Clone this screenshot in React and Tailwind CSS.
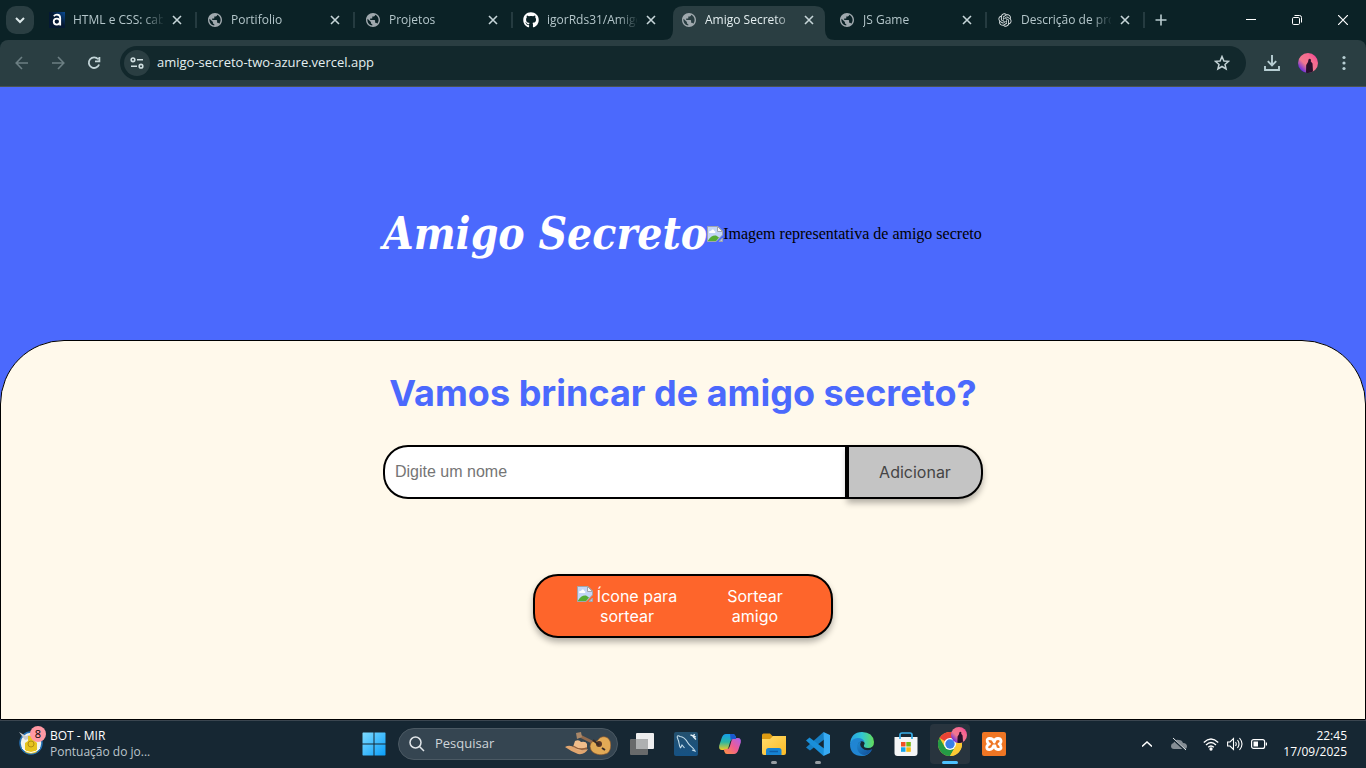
import React from "react";
import { FaGithub } from "react-icons/fa";
import { RiOpenaiFill } from "react-icons/ri";

const GlobeIcon = () => (
  <svg viewBox="2 2 20 20" className="size-3.5 fill-[#9fa8ad]" aria-hidden="true">
    <path d="M12 2C6.48 2 2 6.48 2 12s4.48 10 10 10 10-4.48 10-10S17.52 2 12 2zm-1 17.93c-3.95-.49-7-3.85-7-7.93 0-.62.08-1.21.21-1.79L9 15v1c0 1.1.9 2 2 2v1.93zm6.9-2.54c-.26-.81-1-1.39-1.9-1.39h-1v-3c0-.55-.45-1-1-1H8v-2h2c.55 0 1-.45 1-1V7h2c1.1 0 2-.9 2-2v-.41c2.93 1.19 5 4.06 5 7.41 0 2.08-.8 3.97-2.1 5.39z" />
  </svg>
);

const AluraIcon = () => (
  <svg viewBox="0 0 16 16" className="size-4" aria-hidden="true">
    <defs>
      <linearGradient id="alura" x1="0" y1="1" x2="1" y2="0">
        <stop offset=".55" stopColor="#051933" />
        <stop offset="1" stopColor="#0a4c95" />
      </linearGradient>
    </defs>
    <rect width="16" height="16" fill="url(#alura)" />
    <path d="M4.800 4.200Q6 2.600 8 2.600Q11.200 2.600 11.200 6V13.500" fill="none" stroke="#fff" strokeWidth="1.800" />
    <ellipse cx="7.800" cy="9.600" rx="3.100" ry="3" fill="none" stroke="#fff" strokeWidth="1.800" />
  </svg>
);

const BrokenImage = ({ className = "" }) => (
  <svg viewBox="0 0 16 16" className={"size-4 shrink-0 " + className} aria-hidden="true">
    <path d="M.5.500H11L15.500 5V9L9 15.500H.500Z" fill="#c4d6f7" stroke="#a0a6ad" />
    <path d="M2 6.500C2 5 3.500 4.700 4 5.200C4.400 3 7 3 7.300 5C8.500 5 8.700 6.500 8 7H2.500Z" fill="#fff" />
    <path d="M1 14.500C3 11 6 9 9 9.500L12 11.500L9 15H1Z" fill="#56ad35" />
    <path d="M10.500.5V5.500H15.500Z" fill="#f5f6f8" stroke="#a0a6ad" />
    <path d="M12 15.500L15.500 12V15.500Z" fill="#b9cbe9" stroke="#a0a6ad" />
  </svg>
);

const tabs = [
  { title: "HTML e CSS: cab", icon: <AluraIcon />, line: true },
  { title: "Portifolio", icon: <GlobeIcon />, line: true },
  { title: "Projetos", icon: <GlobeIcon />, line: true },
  { title: "igorRds31/Amigo", icon: <FaGithub className="size-4 text-white" /> },
  { title: "Amigo Secreto", icon: <GlobeIcon />, active: true },
  { title: "JS Game", icon: <GlobeIcon />, line: true },
  { title: "Descrição de pro", icon: <RiOpenaiFill className="size-4 text-[#dfe5e6]" />, line: true },
];

function Tab({ title, icon, active, line }) {
  return (
    <div className="relative flex w-[158px] shrink-0 items-center pt-1.5 pb-1.5">
      {active && (
        <svg viewBox="0 0 172 34" className="absolute top-1.5 -left-2 h-[34px] w-[172px] fill-[#2a3e42]" aria-hidden="true">
          <path d="M0 34Q10 34 10 24V10Q10 0 20 0H152Q162 0 162 10V24Q162 34 172 34Z" />
        </svg>
      )}
      <button
        className={
          "relative flex h-7 items-center gap-2 pl-2.5 text-left text-xs " +
          (active ? "text-[#e3edef]" : "text-[#b4c6ca]")
        }
      >
        <span className="flex size-4 items-center justify-center">{icon}</span>
        <span className="w-[90px] overflow-hidden whitespace-nowrap [mask-image:linear-gradient(to_right,#000_70px,transparent_92px)]">
          {title}
        </span>
      </button>
      <button aria-label="Fechar guia" className="relative ml-1.5 flex size-4 items-center justify-center">
        <svg viewBox="0 0 10 10" className="size-2.5 fill-none stroke-[#c6d5d8] stroke-[1.6]">
          <path d="M1 1L9 9M9 1L1 9" />
        </svg>
      </button>
      {line && <span className="absolute top-3 right-0 h-4 w-0.5 bg-[#253b40]" />}
    </div>
  );
}

const ToolButton = ({ label, children }) => (
  <button aria-label={label} className="flex h-9 w-9 items-center justify-center">
    {children}
  </button>
);

const Avatar = ({ className }) => (
  <svg viewBox="0 0 20 20" className={className} aria-hidden="true">
    <defs>
      <linearGradient id="avatar" x1="0" y1="1" x2="1" y2="0">
        <stop offset=".1" stopColor="#4a1cf0" />
        <stop offset=".4" stopColor="#f0788f" />
        <stop offset=".7" stopColor="#f66a90" />
        <stop offset="1" stopColor="#f5309a" />
      </linearGradient>
    </defs>
    <circle cx="10" cy="10" r="10" fill="url(#avatar)" />
    <path d="M8 19.800L8.200 12L10 9L10.500 6.500Q11.800 5 13 6.800L12.800 8.500L14.500 10.500L15 18.500Q12 20.500 8 19.800Z" fill="#29102b" />
  </svg>
);

function Browser() {
  return (
    <header className="bg-[#0b2226] font-['Open_Sans',sans-serif]">
      <div className="flex h-10">
        <button aria-label="Pesquisar guias" className="mt-1.5 ml-1.5 flex size-7 items-center justify-center rounded-[10px] bg-[#2a3e42]">
          <svg viewBox="0 0 10 10" className="size-2.5 fill-none stroke-[#dce8ea] stroke-2">
            <path d="M1 3L5 7L9 3" />
          </svg>
        </button>
        <nav className="ml-[5px] flex">
          {tabs.map((t) => (
            <Tab key={t.title} {...t} />
          ))}
        </nav>
        <button aria-label="Nova guia" className="flex w-8 items-center justify-center">
          <svg viewBox="0 0 12 12" className="size-3 fill-none stroke-[#b9cccf] stroke-[1.6]">
            <path d="M6 .5V11.500M.5 6H11.500" />
          </svg>
        </button>
        <div className="ml-auto flex">
          <button aria-label="Minimizar" className="flex w-[46px] items-center justify-center">
            <svg viewBox="0 0 10 10" className="size-2.5 stroke-white"><path d="M0 4.500H10" /></svg>
          </button>
          <button aria-label="Restaurar" className="flex w-[46px] items-center justify-center">
            <svg viewBox="0 0 10 10" className="size-2.5 fill-none stroke-white">
              <rect x=".5" y="2.500" width="7" height="7" rx="1.200" />
              <path d="M2.500.5H7.500Q9.500.5 9.500 2.500V7.500" />
            </svg>
          </button>
          <button aria-label="Fechar" className="flex w-[46px] items-center justify-center">
            <svg viewBox="0 0 10 10" className="size-2.5 fill-none stroke-white stroke-[1.2]"><path d="M0 0L10 10M10 0L0 10" /></svg>
          </button>
        </div>
      </div>
      <div className="flex h-[47px] items-center rounded-t-lg border-b border-[#4a5350] bg-[#2a3e42] px-1">
        <ToolButton label="Voltar">
          <svg viewBox="0 0 14 14" className="size-3.5 fill-none stroke-[#6c7f83] stroke-[1.6]"><path d="M13 7H1.500M7 1L1.200 7L7 13" /></svg>
        </ToolButton>
        <ToolButton label="Avançar">
          <svg viewBox="0 0 14 14" className="size-3.5 fill-none stroke-[#6c7f83] stroke-[1.6]"><path d="M1 7H12.500M7 1L12.800 7L7 13" /></svg>
        </ToolButton>
        <ToolButton label="Recarregar">
          <svg viewBox="0 0 14 14" className="size-3.5 fill-none stroke-[#c3d5d8] stroke-[1.8]">
            <path d="M11.200 3.300A5.300 5.300 0 1 0 12.100 8.500M12.400 1V5.400H8" />
          </svg>
        </ToolButton>
        <div className="mx-2 flex h-[34px] flex-1 items-center rounded-full bg-[#12282c] pr-4 pl-1">
          <button aria-label="Informações do site" className="flex size-[26px] items-center justify-center rounded-full bg-[#2a3e42]">
            <svg viewBox="0 0 14 12" className="h-3 w-3.5 fill-none stroke-[#d0dfe1] stroke-[1.6]">
              <circle cx="3" cy="2.800" r="1.800" /><path d="M7 2.800H13M1 9.200H7" /><circle cx="11" cy="9.200" r="1.800" />
            </svg>
          </button>
          <input aria-label="Endereço" defaultValue="amigo-secreto-two-azure.vercel.app" className="ml-[7px] min-w-0 flex-1 bg-transparent text-[13px] text-[#e4eff0] outline-none" />
          <button aria-label="Favoritar" className="flex size-4 items-center justify-center">
            <svg viewBox="0 0 16 16" className="size-4 fill-none stroke-[#c3d2d5] stroke-[1.5]">
              <path d="M8 1.500L9.900 6L14.600 6.300L11 9.400L12.100 14L8 11.500L3.900 14L5 9.400L1.400 6.300L6.100 6Z" />
            </svg>
          </button>
        </div>
        <ToolButton label="Downloads">
          <svg viewBox="0 0 16 16" className="size-4 fill-none stroke-[#b7ced3] stroke-[1.9]">
            <path d="M8 0V10M3.800 6.200L8 10.400L12.200 6.200M1 11V15H15V11" />
          </svg>
        </ToolButton>
        <ToolButton label="Perfil"><Avatar className="size-5" /></ToolButton>
        <ToolButton label="Menu">
          <svg viewBox="0 0 4 16" className="h-4 w-1 fill-[#b7ced3]">
            <circle cx="2" cy="2.500" r="1.600" /><circle cx="2" cy="8" r="1.600" /><circle cx="2" cy="13.500" r="1.600" />
          </svg>
        </ToolButton>
      </div>
    </header>
  );
}

function Page() {
  return (
    <main className="flex flex-1 flex-col bg-[#4b69fd]">
      <div className="flex justify-center pt-[117px] pb-[76px]">
        <div className="flex w-full max-w-[600px] items-center">
          <h1 className="font-['DejaVu_Serif_Condensed','DejaVu_Serif',serif] text-[44px] leading-[60px] font-black whitespace-nowrap text-white italic">
            Amigo Secreto
          </h1>
          <div role="img" aria-label="Imagem representativa de amigo secreto" className="flex items-center font-['Liberation_Serif',serif] text-base whitespace-nowrap text-black">
            <BrokenImage />
            <span>Imagem representativa de amigo secreto</span>
          </div>
        </div>
      </div>
      <section className="flex flex-1 flex-col items-center rounded-t-[64px] border border-black bg-[#fff9eb] pt-[30px] font-['Inter',sans-serif]">
        <h2 className="text-4xl leading-[44px] font-bold text-[#4b69fd]">Vamos brincar de amigo secreto?</h2>
        <form className="mt-[30px] flex h-[54px] w-full max-w-[600px]" onSubmit={(e) => e.preventDefault()}>
          <input
            type="text"
            aria-label="Digite um nome"
            placeholder="Digite um nome"
            className="min-w-0 flex-1 rounded-l-[25px] border-2 border-black bg-white px-2.5 font-['Liberation_Sans',sans-serif] text-base placeholder:text-[#757575]"
          />
          <button className="w-[136px] rounded-r-[25px] border-2 border-black bg-[#c4c4c4] text-base text-[#444444] shadow-[0_4px_6px_rgba(0,0,0,0.3)]">
            Adicionar
          </button>
        </form>
        <button className="mt-[75px] flex h-16 w-[300px] items-center gap-10 rounded-[25px] border-2 border-black bg-[#fe652b] px-10 text-base leading-5 text-white shadow-[0_4px_6px_rgba(0,0,0,0.3)]">
          <span className="w-[104px]">
            <BrokenImage className="mr-1 inline-block align-top" />
            Ícone para sortear
          </span>
          <span className="w-[72px]">Sortear amigo</span>
        </button>
      </section>
    </main>
  );
}

const CopilotIcon = () => (
  <svg viewBox="0 0 24 24" className="size-6">
    <defs>
      <linearGradient id="cpA" x1="0" y1="0" x2="0" y2="1"><stop stopColor="#159dea" /><stop offset=".5" stopColor="#28b6a5" /><stop offset="1" stopColor="#f3cb22" /></linearGradient>
      <linearGradient id="cpB" x1="1" y1="0" x2="0" y2="1"><stop stopColor="#a960f1" /><stop offset=".5" stopColor="#ef5c91" /><stop offset="1" stopColor="#ff963d" /></linearGradient>
    </defs>
    <path d="M8 2H15Q17 2 17.700 4.500L18.300 7H15Q13 7 12.200 9.500L10.300 16Q9.500 18 7 18H4Q.5 18 1.200 13.500L3.700 6Q5 2 8 2Z" fill="url(#cpA)" />
    <path d="M16 22H9Q7 22 6.300 19.500L5.700 17H9Q11 17 11.800 14.500L13.700 8Q14.500 6 17 6H20Q23.500 6 22.800 10.500L20.300 18Q19 22 16 22Z" fill="url(#cpB)" />
    <path d="M12 2H15Q17 2 17.700 4.500L18.300 7H15Q13.500 7 12.700 8Z" fill="#1b58cf" />
  </svg>
);

const MysqlIcon = () => (
  <svg viewBox="0 0 24 24" className="size-6">
    <defs><linearGradient id="my" x2="0" y2="1"><stop stopColor="#24516f" /><stop offset="1" stopColor="#165284" /></linearGradient></defs>
    <rect width="24" height="24" rx="2" fill="url(#my)" />
    <path d="M6.500 16C4.500 13 5.500 10 4 7.500C2.500 4.500 3 2.500 6 4.500C10 4.500 12 7.500 14 11C16 14.500 19 14.500 21 19L18 18M6.500 16L8 13L10.500 16" fill="none" stroke="#c3dce9" strokeWidth="1.100" />
    <path d="M16.500 3L18.500 3.500L19.500 5L22 7.500M20.500 2L19.500 4L22 5" fill="none" stroke="#e4f0f6" strokeWidth="1.300" />
  </svg>
);

const FolderIcon = () => (
  <svg viewBox="0 0 24 24" className="size-6">
    <defs><linearGradient id="fold" x2="1" y2="1"><stop stopColor="#ffdc6c" /><stop offset="1" stopColor="#fbba24" /></linearGradient></defs>
    <path d="M0 3Q0 1.500 1.500 1.500H8L10.500 4H22.500Q24 4 24 5.500V12H0Z" fill="#dd9b12" />
    <path d="M0 7H8L11 4H24V21Q24 23 22 23H2Q0 23 0 21Z" fill="url(#fold)" />
    <path d="M4 23V18.500Q4 16 6.500 16H17Q19.500 16 19.500 18.500V23Z" fill="#1683d2" />
    <path d="M7.500 19.500H16" stroke="#0d5da7" strokeWidth="1.500" />
  </svg>
);

const CodeIcon = () => (
  <svg viewBox="0 0 24 24" className="size-6">
    <path d="M17.500 0L20 6L4 18.500L0 15.500Z" fill="#167fc4" />
    <path d="M0 8.500L3.500 5.500L20 18L17.500 24L0 8.500Z" fill="#198fd9" />
    <path d="M17.500 0L24 3V21L17.500 24L17.800 17V7Z" fill="#37aaf2" />
  </svg>
);

const EdgeIcon = () => (
  <svg viewBox="0 0 24 24" className="size-6">
    <defs>
      <linearGradient id="edA" x2="1"><stop stopColor="#279fe3" /><stop offset=".5" stopColor="#31c6d3" /><stop offset="1" stopColor="#63dc58" /></linearGradient>
      <linearGradient id="edB" x2="1" y2="1"><stop stopColor="#1d8bd3" /><stop offset="1" stopColor="#124a94" /></linearGradient>
    </defs>
    <path d="M0 12Q1 0 12 0Q23 0 24 10Q24 16 18 16Q13 16 14 13Q16 11 12 8Q6 5 0 12Z" fill="url(#edA)" />
    <path d="M0 12Q2 6 8 6Q13 6 14.500 10Q11 8 8.500 11Q6 16 11 20Q17 23 22 18Q18 24 12 24Q0 24 0 12Z" fill="#2085d2" />
    <path d="M10 9.500Q5 13 8 19Q12 25 18 22Q21 20 22.300 17Q16 20 12 16Q9 13 11 10Z" fill="url(#edB)" />
  </svg>
);

const StoreIcon = () => (
  <svg viewBox="0 0 24 24" className="size-6">
    <path d="M.5 5H23.500V21Q23.500 24 20.500 24H3.500Q.5 24 .5 21Z" fill="#f4f5f6" />
    <path d="M6 7V3Q6 1 8 1H16Q18 1 18 3V7" fill="none" stroke="#38aee9" strokeWidth="1.700" />
    <rect x="7" y="10" width="4.500" height="4.500" fill="#f04f24" /><rect x="12.300" y="10" width="4.500" height="4.500" fill="#77b914" />
    <rect x="7" y="15.300" width="4.500" height="4.500" fill="#13a4ea" /><rect x="12.300" y="15.300" width="4.500" height="4.500" fill="#f8b90d" />
  </svg>
);

const ChromeIcon = () => (
  <svg viewBox="0 0 24 24" className="size-6">
    <circle cx="12" cy="12" r="12" fill="#fcc934" />
    <path d="M12 12L1.600 6A12 12 0 0 1 22.400 6Z" fill="#ea4335" />
    <path d="M1.600 6A12 12 0 0 0 12 24L17.200 15L12 12L6.800 15Z" fill="#249b45" />
    <path d="M12 6H22.400A12 12 0 0 1 12 24L17.200 15Z" fill="#fcc934" />
    <circle cx="12" cy="12" r="6" fill="#fff" /><circle cx="12" cy="12" r="4.700" fill="#397fe8" />
  </svg>
);

const XamppIcon = () => (
  <svg viewBox="0 0 24 24" className="size-6">
    <rect width="24" height="24" rx="2" fill="#ef7624" />
    <path
      d="M7.500 6.500Q4.800 6.500 5.200 9Q5.500 11.500 7.500 12Q4.800 13 4.800 15.300Q4.800 17.800 7.500 17.600Q10.800 17.300 11.500 14H13Q13 17.500 16 17.500Q19.500 17.500 19 15Q18.700 12.700 17 12Q19.300 11 19 8.700Q18.600 6.500 16 6.500Q12.700 6.500 12.200 10Q11.500 6.500 7.500 6.500Z"
      fill="none" stroke="#fff" strokeWidth="2.800" strokeLinejoin="round"
    />
  </svg>
);

const WindowsIcon = () => (
  <svg viewBox="0 0 24 24" className="size-6">
    <defs>
      <linearGradient id="win" gradientUnits="userSpaceOnUse" x1="0" y1="0" x2="24" y2="24"><stop stopColor="#80dcff" /><stop offset="1" stopColor="#079cf9" /></linearGradient>
    </defs>
    <path d="M1 .5H11.500V11.500H.5V1ZM12.500.5H23L23.500 1V11.500H12.500ZM.5 12.500H11.500V23.500H1L.5 23ZM12.500 12.500H23.500V23L23 23.500H12.500Z" fill="url(#win)" />
  </svg>
);

const DesktopsIcon = () => (
  <svg viewBox="0 0 24 24" className="size-6">
    <rect x="6" y="1" width="18" height="16" rx="1" fill="#eeeeef" />
    <rect x="0" y="7" width="18" height="16" rx="1" fill="#686a6b" />
    <path d="M6 7H18V17H6Z" fill="#aeb0b1" />
  </svg>
);

const GuitarArt = () => (
  <svg viewBox="0 0 46 24" className="h-6 w-[46px]" aria-hidden="true">
    <path d="M13 3L33 13" stroke="#926a4d" strokeWidth="3" />
    <path d="M11 1L16 0L17 5L12 7Z" fill="#a98768" />
    <path d="M26 11C28 8 31 11 33 8C36 3 43 4 45 9C47 14 45 22 40 22C36 24 28 22 26 18Q24 14 26 11Z" fill="#e2aa56" stroke="#8b572c" strokeWidth=".7" />
    <circle cx="34" cy="12" r="3" fill="#563527" /><path d="M28 8L34 13M37 16L40 18" stroke="#372b28" strokeWidth="2" />
    <path d="M0 15Q5 12 10 16Q16 20 23 17Q20 23 13 22Q7 20 0 15Z" fill="#e0a56f" />
    <path d="M8 15L10 9Q14 7 16 10Q21 9 22 12V17Q15 21 8 15Z" fill="#f0bd8b" />
    <path d="M8 14Q15 19 22 16" fill="none" stroke="#93603c" strokeWidth="1.500" />
  </svg>
);

const apps = [
  { name: "Visão de tarefas", icon: <DesktopsIcon /> },
  { name: "MySQL Workbench", icon: <MysqlIcon /> },
  { name: "Copilot", icon: <CopilotIcon /> },
  { name: "Explorador de Arquivos", icon: <FolderIcon />, running: true },
  { name: "Visual Studio Code", icon: <CodeIcon />, running: true },
  { name: "Edge", icon: <EdgeIcon /> },
  { name: "Microsoft Store", icon: <StoreIcon /> },
  { name: "Chrome", icon: <ChromeIcon />, current: true },
  { name: "XAMPP", icon: <XamppIcon /> },
];

function Taskbar() {
  return (
    <footer className="grid h-12 grid-cols-[1fr_auto_1fr] items-center bg-[#162733] font-['Open_Sans',sans-serif] text-white shadow-[inset_0_1px_#3b4650]">
      <button className="flex items-center gap-1 justify-self-start pl-[18px] text-left">
        <span className="relative size-7">
          <svg viewBox="0 0 28 28" className="size-7" aria-hidden="true">
            <circle cx="13" cy="13" r="11" fill="#f1f3ed" stroke="#2370b6" strokeWidth="1.500" />
            <path d="M1 2L8 6L13 4L14 8L7 10Z" fill="#c9ccd0" />
            <path d="M10 6H17V11L19 13V22Q13 25 7 22V13L10 11Z" fill="#e7c41f" />
            <circle cx="13" cy="14" r="3" fill="none" stroke="#b18d14" />
            <path d="M4 18Q13 27 22 18" fill="none" stroke="#fff" />
          </svg>
          <span className="absolute -top-1 left-3 flex size-4 items-center justify-center rounded-full bg-[#ff99a4] text-[11px] text-black">8</span>
        </span>
        <span className="text-xs leading-4">
          <span className="block">BOT - MIR</span>
          <span className="block text-[#bcc5cb]">Pontuação do jo...</span>
        </span>
      </button>
      <div className="flex items-center pl-0.5">
        <button aria-label="Iniciar" className="flex h-10 w-11 items-center justify-center"><WindowsIcon /></button>
        <div className="mx-0.5 flex h-8 w-[220px] items-center rounded-full border border-[#4b5963] bg-[#354551] pr-1.5 pl-2.5">
          <svg viewBox="0 0 16 16" className="size-4 shrink-0 fill-none stroke-[#e1e6e9] stroke-[1.5]" aria-hidden="true">
            <circle cx="6.500" cy="6.500" r="5.500" /><path d="M10.500 10.500L15 15" />
          </svg>
          <input aria-label="Pesquisar" placeholder="Pesquisar" className="ml-2.5 min-w-0 flex-1 bg-transparent text-[13px] outline-none placeholder:text-[#cfd5d9]" />
          <GuitarArt />
        </div>
        {apps.map((a) => (
          <button key={a.name} aria-label={a.name} className="flex w-11 justify-center">
            <span className={"relative flex size-10 items-center justify-center rounded " + (a.current ? "bg-[#28343e]" : "")}>
              {a.icon}
              {a.current && <Avatar className="absolute top-[3px] right-[3px] size-4" />}
              {a.running && <span className="absolute bottom-0 h-[3px] w-1.5 rounded-full bg-[#969da2]" />}
              {a.current && <span className="absolute bottom-0 h-[3px] w-4 rounded-full bg-[#4cc2ff]" />}
            </span>
          </button>
        ))}
      </div>
      <div className="flex items-center justify-self-end pr-[19px]">
        <button aria-label="Ícones ocultos" className="flex w-8 justify-center">
          <svg viewBox="0 0 10 6" className="h-1.5 w-2.5 fill-none stroke-white stroke-[1.5]"><path d="M0 5.500L5 1L10 5.500" /></svg>
        </button>
        <button aria-label="OneDrive" className="flex w-8 justify-center">
          <svg viewBox="0 0 16 14" className="h-3.5 w-4">
            <path d="M3 12Q0 12 0 9Q0 6.500 2.500 6Q4 2 8 3Q11 3 12 6Q16 6 16 9.500Q16 12 13 12Z" fill="#858e95" />
            <path d="M2 2L14 13" stroke="#162733" strokeWidth="2.200" /><path d="M2 1L15 13" stroke="#e8ebed" />
          </svg>
        </button>
        <button aria-label="Rede, volume e bateria" className="flex items-center gap-2 px-2">
          <svg viewBox="0 0 16 14" className="h-3.5 w-4 fill-none stroke-white stroke-[1.3]">
            <path d="M.8 5.500Q8-1.500 15.200 5.500M3 8Q8 3 13 8M5.200 10.300Q8 7.600 10.800 10.300" /><circle cx="8" cy="12" r="1" fill="#fff" />
          </svg>
          <svg viewBox="0 0 16 14" className="h-3.5 w-4 fill-none stroke-white stroke-[1.1]">
            <path d="M.6 5H3L6.500 1.500V12.500L3 9H.6ZM8.500 5Q10 7 8.500 9M10.500 3Q13.500 7 10.500 11M12.500 1Q17.500 7 12.500 13" />
          </svg>
          <svg viewBox="0 0 16 14" className="h-3.5 w-4 fill-none stroke-white stroke-[1.2]">
            <rect x=".6" y="2.600" width="13" height="8.800" rx="2" /><path d="M15.400 5.500V8.500" /><rect x="2.500" y="4.500" width="4.500" height="5" fill="#fff" stroke="none" />
          </svg>
        </button>
        <time className="ml-2 text-right text-xs leading-4">
          <span className="block">22:45</span>
          <span className="block">17/09/2025</span>
        </time>
      </div>
    </footer>
  );
}

export default function App() {
  return (
    <div className="flex min-h-screen flex-col">
      <Browser />
      <Page />
      <Taskbar />
    </div>
  );
}
